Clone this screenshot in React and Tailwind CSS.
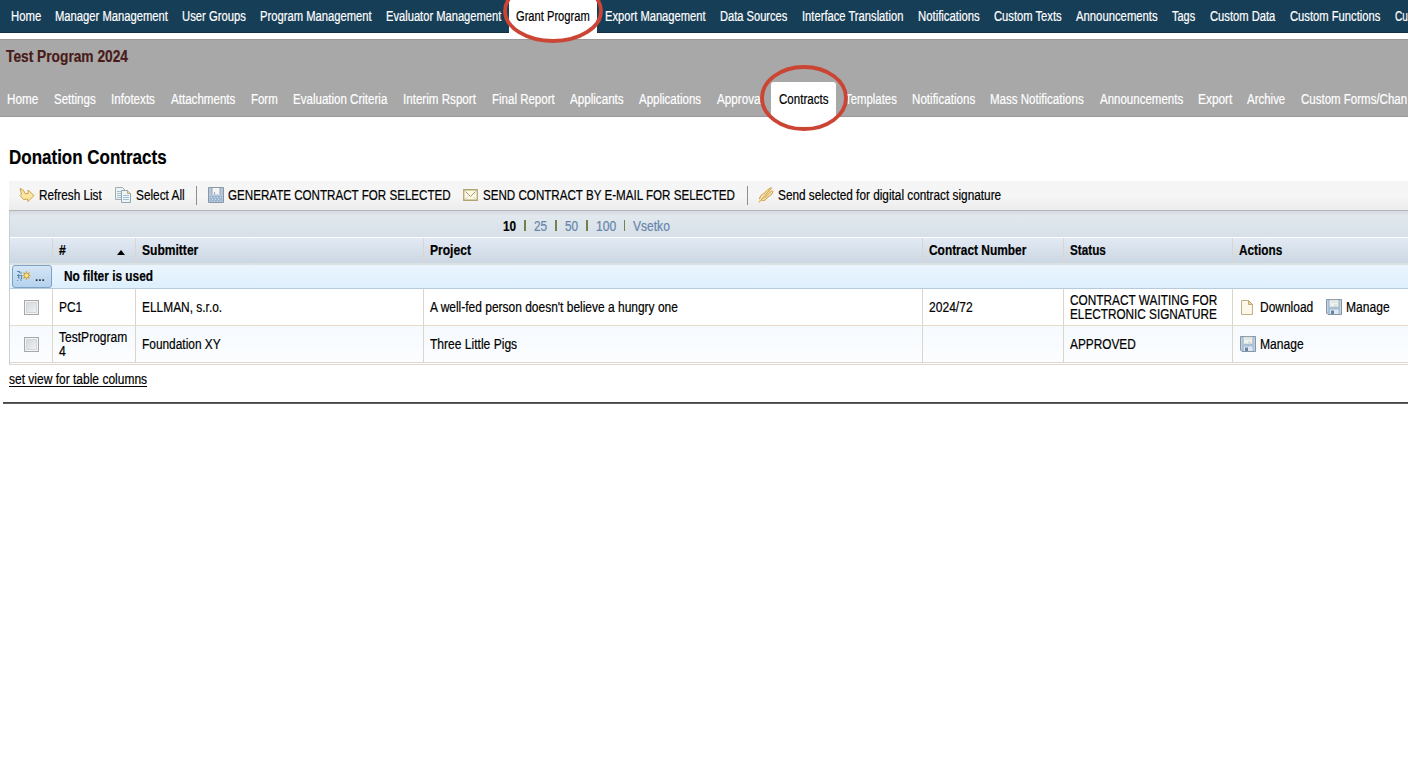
import { useLayoutEffect, useRef, useState } from "react";

// Text squeezed horizontally to a given width, like a condensed Arial.
function Fit({ w, children, className = "" }) {
  const ref = useRef(null);
  const [scale, setScale] = useState(0.85);
  useLayoutEffect(() => {
    if (ref.current) setScale(w / ref.current.offsetWidth);
  }, [w]);
  return (
    <span className="inline-block shrink-0" style={{ width: w }}>
      <span ref={ref} className={"inline-block origin-left whitespace-pre " + className} style={{ transform: `scaleX(${scale})` }}>
        {children}
      </span>
    </span>
  );
}

// [label, distance to the next item, text width]
const MAIN = [
  ["Home", 44, 30], ["Manager Management", 127, 113], ["User Groups", 78, 63.5], ["Program Management", 126, 111.5],
  ["Evaluator Management", 130, 115.5], ["Grant Program", 89, 74], ["Export Management", 115, 100.5], ["Data Sources", 82, 67.5],
  ["Interface Translation", 116, 101.5], ["Notifications", 76, 61.5], ["Custom Texts", 82, 68], ["Announcements", 96, 81.5],
  ["Tags", 38, 23.5], ["Custom Data", 80, 65.5], ["Custom Functions", 105, 90.5], ["Cu", 13, 13],
];
const SUB = [
  ["Home", 47, 31], ["Settings", 57, 42], ["Infotexts", 59.5, 44], ["Attachments", 80, 64.5], ["Form", 42.5, 27],
  ["Evaluation Criteria", 110, 94], ["Interim Rsport", 89, 73], ["Final Report", 78, 62.5], ["Applicants", 69, 54],
  ["Applications", 78, 62.5], ["Approval", 61.5, 46], ["Contracts", 66, 49.5], ["Templates", 67, 52], ["Notifications", 78.5, 63],
  ["Mass Notifications", 109.5, 94], ["Announcements", 98.5, 83], ["Export", 49, 34], ["Archive", 54, 38.5], ["Custom Forms/Chan", 106, 106],
];

function Floppy() {
  return (
    <svg width="16" height="16" viewBox="0 0 16 16" className="block shrink-0">
      <path d="M.5 .5h15v15H2L.5 14z" fill="#a9bfd6" stroke="#8695a4" />
      <path d="M1.5 1v12.500M14.500 1v14" stroke="#c3d3e3" />
      <path d="M3.500 1h9v7h-9z" fill="#f0f2ee" stroke="#b4bfca" strokeWidth=".6" />
      <path d="M5 3h6" stroke="#d5d9d6" />
      <path d="M8 5.500h3v2.500H8z" fill="#d9dcd8" />
      <path d="M4 10.500h8.500V15H4z" fill="#dde7f0" />
      <path d="M5 11.500h3V15H5z" fill="#6686a6" />
    </svg>
  );
}
function GenerateIcon() {
  return (
    <svg width="16" height="16" viewBox="0 0 16 16" className="block shrink-0">
      <path d="M.5 .5h15v15H.5z" fill="#b4c6d9" stroke="#8a98a6" />
      <path d="M4 1h8v6.500H4z" fill="#f5f6f4" />
      <path d="M4 1v6.500M12 1v6.500M6.500 5v2.500" stroke="#92a4b6" />
      <path d="M2 9h12v6H2z" fill="#9db7d3" />
      <path d="M3 10.500h10M4 12.500h9M3 14.500h10" stroke="#d3e0ed" strokeDasharray="1 2" />
    </svg>
  );
}
function RefreshIcon() {
  return (
    <svg width="16" height="16" viewBox="0 0 16 16" className="block shrink-0">
      <path d="M1 1.500l3.500 1.800 1.500 3.200 3 .3V3l6 5.500-6 6-.5-2.500-4 .5L1 8.500l1.500-1.500z" fill="#fae5a3" stroke="#cda248" strokeLinejoin="round" />
    </svg>
  );
}
function CopyIcon() {
  return (
    <svg width="17" height="16" viewBox="0 0 17 16" className="block shrink-0">
      <path d="M.5 .5h7l2 2v10h-9z" fill="#edf3f1" stroke="#9fadb2" />
      <path d="M2 4.500h5M2 6.500h5M2 8.500h4M2 10.500h4" stroke="#a6c0cb" />
      <path d="M6.500 3.500h6l3 3v9h-9z" fill="#edf4f7" stroke="#91a6b0" />
      <path d="M12.500 3.500v3h3" fill="#e7d3a1" stroke="#b9a880" />
      <path d="M8 8.500h6M8 10.500h6M8 12.500h6" stroke="#9fc2d6" />
    </svg>
  );
}
function MailIcon() {
  return (
    <svg width="15" height="12" viewBox="0 0 15 12" className="block shrink-0">
      <path d="M.75 .75h13.500v10.500H.75z" fill="#fdf8e3" stroke="#b0a571" strokeWidth="1.300" />
      <path d="M2.500 2.500l5 5 5-5" fill="none" stroke="#a39c7c" />
      <path d="M2.500 10l2.500-2.500M12.500 10L10 7.500" fill="none" stroke="#dcd4b4" />
    </svg>
  );
}
function SignIcon() {
  return (
    <svg width="16" height="16" viewBox="0 0 16 16" className="block shrink-0">
      <path d="M1 15.500c-.8-4 .5-7 4-9 2-3.500 5-6 8-6l1 2.500 1.500 1c-.5 3-2.500 5-5 6-1.500 3-4 4.500-7 4z" fill="#f6e2ae" />
      <path d="M1 15.500L13.500 1M1.500 12c.5-3 2-4.500 4.500-5.500s4-5 7.500-6M4 13.500c2.500.5 4.500-1 5.500-3.500 3-1 5-3 5.500-6M6 11.500L14 3.500" fill="none" stroke="#c9a050" />
    </svg>
  );
}
function PageIcon() {
  return (
    <svg width="12" height="15" viewBox="0 0 12 15" className="block shrink-0">
      <path d="M.5 .5h7l4 4v10H.5z" fill="#fbf8ea" stroke="#c0ae84" />
      <path d="M7.500 .5v4h4z" fill="#efd69c" stroke="#c0a877" />
    </svg>
  );
}
function FilterIcon() {
  return (
    <svg width="15" height="12" viewBox="0 0 15 12" className="block shrink-0">
      <path d="M1 1.500h2M4 3h2M1 5.500h5M2 8h2M4 10h2M1 10.500h1M3.500 1v2M2.500 4v4M5.500 6v3" stroke="#5e8cae" strokeWidth="1.200" />
      <path d="M10.500 1v9M6.500 5.500h8M7.500 2.500l6 6M13.500 2.500l-6 6" stroke="#cda84e" strokeWidth="1.100" />
      <circle cx="10.500" cy="5.500" r="2.400" fill="#fbe47f" stroke="#c79e40" />
    </svg>
  );
}
function Checkbox() {
  return <span className="block h-[15px] w-[15px] border border-[#a5a9ae] bg-linear-to-br from-[#d0d5da] to-[#f4f5f6] shadow-[inset_0_0_0_1px_#f3f3f3,inset_0_0_0_2px_#d3d7db]" />;
}
function Ring({ w, h, className }) {
  return (
    <svg width={w} height={h} viewBox={`0 0 ${w} ${h}`} className={"pointer-events-none absolute " + className}>
      <ellipse cx={w / 2} cy={h / 2} rx={w / 2 - 2} ry={h / 2 - 2} fill="none" stroke="#cb4535" strokeWidth="3.800" />
    </svg>
  );
}
function Bar() {
  return <span className="mr-[8px] h-[11px] w-[1.500px] bg-[#73814f]" />;
}

const COLS = "grid grid-cols-[42px_83px_288px_499px_141px_169px_1fr]";
const CELL = "flex items-center border-l border-[#ddd5c9] pl-[6.400px]";

export default function App() {
  return (
    <div className="h-[768px] w-[1408px] overflow-hidden bg-white font-['Liberation_Sans',Arial,sans-serif] text-[14px] leading-[14px] text-black [-webkit-text-stroke:0.200px]">
      <nav className="relative h-[33px] border-b border-[#102f43] bg-[#173e57] pl-[11px] text-white">
        <div className="flex h-full">
          {MAIN.map(([label, slot, w]) => (
            <div key={label} className="relative h-[33px] shrink-0 pt-[9px]" style={{ width: slot }}>
              {label === "Grant Program" && <div className="absolute top-0 -left-[7px] h-[34px] w-[88px] bg-white" />}
              <div className={label === "Grant Program" ? "relative text-black" : ""}><Fit w={w}>{label}</Fit></div>
            </div>
          ))}
        </div>
        <Ring w={100} h={64} className="-top-[21px] left-[503px] z-10" />
      </nav>
      <div className="h-[6px] bg-white" />
      <header className="relative h-[78px] border-y border-t-[#999] border-b-[#989898] bg-[#a8a8a8]">
        <h1 className="pt-[8px] pl-[6px] text-[16px] leading-[18px] font-bold text-[#481b19]"><Fit w={122}>Test Program 2024</Fit></h1>
        <div className="flex h-[51px] pl-[7px] text-white">
          {SUB.map(([label, slot, w]) => (
            <div key={label} className="relative h-full shrink-0 pt-[26px]" style={{ width: slot }}>
              {label === "Contracts" && <div className="absolute top-[16px] -left-[8px] h-[36px] w-[65px] rounded-t-[3px] bg-white" />}
              <div className={label === "Contracts" ? "relative text-black" : ""}><Fit w={w}>{label}</Fit></div>
            </div>
          ))}
        </div>
        <Ring w={88} h={66} className="top-[25px] left-[760px] z-10" />
      </header>

      <main className="pl-[9px]">
        <h2 className="pt-[29px] text-[20px] leading-[23px] font-bold"><Fit w={158}>Donation Contracts</Fit></h2>
        <div className="mt-[12px] flex h-[30px] items-center border-b border-[#b3b5b8] bg-linear-to-b from-[#f5f5f5] via-[#f6f6f6] to-[#ececec] pb-[1px] pl-[10px]">
          <RefreshIcon />
          <span className="ml-[4px] flex w-[76px]"><Fit w={63}>Refresh List</Fit></span>
          <CopyIcon />
          <span className="ml-[3.500px] flex w-[60.500px]"><Fit w={49}>Select All</Fit></span>
          <span className="mr-[11px] h-[19px] w-px bg-[#8f8f8f]" />
          <GenerateIcon />
          <span className="ml-[4px] flex w-[235px]"><Fit w={223}>GENERATE CONTRACT FOR SELECTED</Fit></span>
          <MailIcon />
          <span className="ml-[5px] flex w-[264px]"><Fit w={252}>SEND CONTRACT BY E-MAIL FOR SELECTED</Fit></span>
          <span className="mr-[10px] h-[19px] w-px bg-[#8f8f8f]" />
          <SignIcon />
          <span className="ml-[4px] flex"><Fit w={223.500}>Send selected for digital contract signature</Fit></span>
        </div>

        <section className="border-l border-[#c9cfd6]">
          <div className="flex h-[26px] items-center bg-linear-to-b from-[#d5dbe1] via-[#e1e8ee] via-20% to-[#d7e0e8] pt-[3px] pl-[493px] text-[#6684ab]">
            <span className="flex w-[21px] font-bold text-black"><Fit w={13.500}>10</Fit></span>
            <Bar />
            <span className="flex w-[21.500px]"><Fit w={13.500}>25</Fit></span>
            <Bar />
            <span className="flex w-[21.500px]"><Fit w={13.500}>50</Fit></span>
            <Bar />
            <span className="flex w-[28px]"><Fit w={20}>100</Fit></span>
            <Bar />
            <Fit w={37}>Vsetko</Fit>
          </div>
          <div className={COLS + " h-[26px] border-t border-white bg-linear-to-b from-[#e2eaf4] to-[#cbd7e2] font-bold"}>
            <div />
            <div className={CELL + " pb-[2px]"}>
              <Fit w={7}>#</Fit>
              <svg width="8" height="5" viewBox="0 0 8 5" className="mt-[5px] ml-[51px]"><path d="M4 0l4 5H0z" /></svg>
            </div>
            <div className={CELL + " pb-[2px]"}><Fit w={56}>Submitter</Fit></div>
            <div className={CELL + " pb-[2px]"}><Fit w={40.500}>Project</Fit></div>
            <div className={CELL + " pb-[2px]"}><Fit w={97}>Contract Number</Fit></div>
            <div className={CELL + " pb-[2px]"}><Fit w={36}>Status</Fit></div>
            <div className={CELL + " pb-[2px]"}><Fit w={43}>Actions</Fit></div>
          </div>
          <div className="flex h-[26px] items-center border-t-2 border-b border-t-[#dce1e4] border-b-[#b5cbdc] bg-linear-to-b from-[#eaf4fd] to-[#def0fd]">
            <div className="relative z-10 ml-[2px] flex h-[23px] w-[40px] shrink-0 items-center rounded-[3px] border border-[#7da2c4] bg-linear-to-b from-[#d4e5f5] to-[#b4d2ee] pb-[2px] pl-[3px]">
              <FilterIcon />
              <span className="ml-[4px]"><Fit w={10}>...</Fit></span>
            </div>
            <span className="ml-[12px] flex pb-[2px] font-bold"><Fit w={89}>No filter is used</Fit></span>
          </div>
          <div className={COLS + " h-[37px] border-b border-[#e5dbcb]"}>
            <div className="flex items-center pl-[14px]"><Checkbox /></div>
            <div className={CELL}><Fit w={23}>PC1</Fit></div>
            <div className={CELL}><Fit w={80}>ELLMAN, s.r.o.</Fit></div>
            <div className={CELL}><Fit w={248}>A well-fed person doesn't believe a hungry one</Fit></div>
            <div className={CELL}><Fit w={44}>2024/72</Fit></div>
            <div className={CELL}><div className="flex flex-col"><Fit w={147}>CONTRACT WAITING FOR</Fit><Fit w={147}>ELECTRONIC SIGNATURE</Fit></div></div>
            <div className={CELL}>
              <span className="ml-[2px] w-[19px]"><PageIcon /></span>
              <span className="flex w-[66px]"><Fit w={53}>Download</Fit></span>
              <Floppy />
              <span className="ml-[4px] flex"><Fit w={44}>Manage</Fit></span>
            </div>
          </div>
          <div className={COLS + " h-[37px] border-b border-[#ddd6cb] bg-linear-to-b from-[#f5fafe] to-[#fcfdff]"}>
            <div className="flex items-center pl-[14px]"><Checkbox /></div>
            <div className={CELL}><div className="flex flex-col"><Fit w={68}>TestProgram</Fit><Fit w={7}>4</Fit></div></div>
            <div className={CELL}><Fit w={79}>Foundation XY</Fit></div>
            <div className={CELL}><Fit w={87}>Three Little Pigs</Fit></div>
            <div className={CELL} />
            <div className={CELL}><Fit w={66}>APPROVED</Fit></div>
            <div className={CELL}>
              <span className="ml-[1px]"><Floppy /></span>
              <span className="ml-[4px] flex"><Fit w={44}>Manage</Fit></span>
            </div>
          </div>
          <div className="h-[2px] border-b border-[#ddd9d3]" />
        </section>
        <a className="flex pt-[7px] leading-[15px]"><Fit w={138} className="underline underline-offset-2">set view for table columns</Fit></a>
      </main>
      <div className="mt-[15px] ml-[3px] h-[2px] bg-linear-to-b from-[#3d3d3d] to-[#6a6a6a]" />
    </div>
  );
}
